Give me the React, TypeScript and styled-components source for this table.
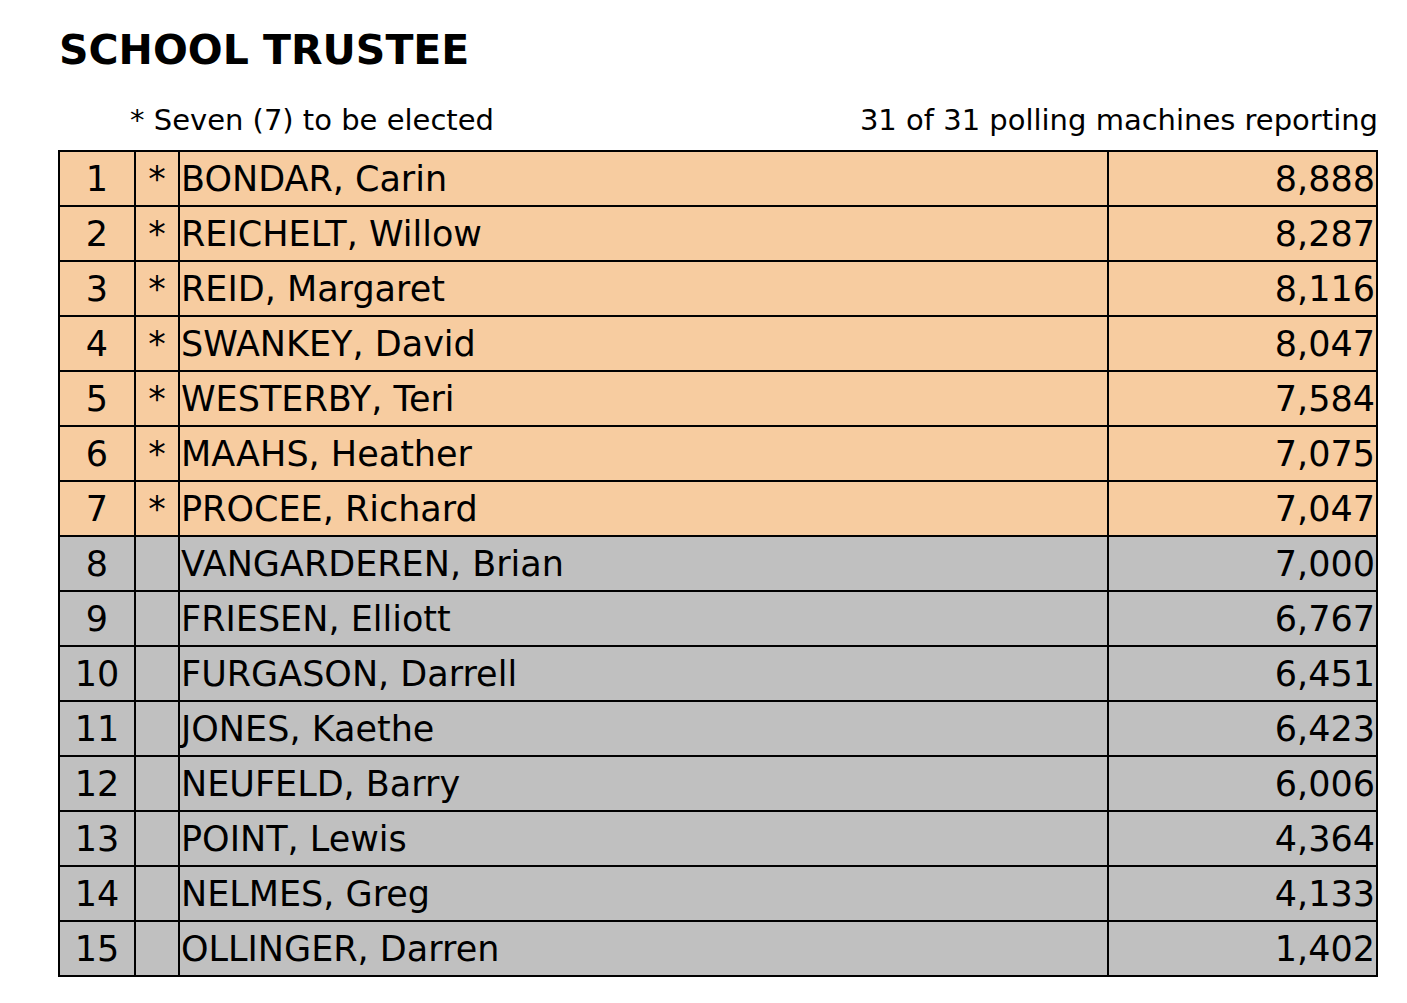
import React from 'react'
import styled, { createGlobalStyle } from 'styled-components'

const GlobalStyle = createGlobalStyle`
  body {
    margin: 0;
    background: #ffffff;
    font-family: Verdana, "DejaVu Sans", sans-serif;
    color: #000000;
  }
`

const Page = styled.div`
  padding: 26px 29px 0 58px;
  width: 1320px;
`

const Title = styled.h1`
  margin: 0;
  font-size: 41px;
  font-weight: bold;
  line-height: 48px;
  padding-left: 1px;
`

const InfoBar = styled.div`
  display: flex;
  justify-content: space-between;
  align-items: baseline;
  margin-top: 29px;
  font-size: 29px;
  line-height: 34px;
  padding-bottom: 13px;
`

const Note = styled.span`
  padding-left: 72px;
`

const Reporting = styled.span``

const Table = styled.table`
  width: 1320px;
  border-collapse: collapse;
  border: 2px solid #000000;
  font-size: 35px;
`

const Row = styled.tr<{ $elected: boolean }>`
  background: ${(p) => (p.$elected ? '#f7cca0' : '#c0c0c0')};
  height: 55px;
`

const Cell = styled.td<{ $align?: 'left' | 'center' | 'right' }>`
  border: 2px solid #000000;
  padding: 0 1px;
  text-align: ${(p) => p.$align ?? 'left'};
  vertical-align: middle;
  line-height: 40px;
  white-space: nowrap;
`

const RankCell = styled(Cell)`
  width: 72px;
`

const StarCell = styled(Cell)`
  width: 40px;
`

const VotesCell = styled(Cell)`
  width: 265px;
`

const candidates: [string, string][] = [
  ['BONDAR, Carin', '8,888'],
  ['REICHELT, Willow', '8,287'],
  ['REID, Margaret', '8,116'],
  ['SWANKEY, David', '8,047'],
  ['WESTERBY, Teri', '7,584'],
  ['MAAHS, Heather', '7,075'],
  ['PROCEE, Richard', '7,047'],
  ['VANGARDEREN, Brian', '7,000'],
  ['FRIESEN, Elliott', '6,767'],
  ['FURGASON, Darrell', '6,451'],
  ['JONES, Kaethe', '6,423'],
  ['NEUFELD, Barry', '6,006'],
  ['POINT, Lewis', '4,364'],
  ['NELMES, Greg', '4,133'],
  ['OLLINGER, Darren', '1,402'],
]

const SEATS = 7

export default function App() {
  return (
    <>
      <GlobalStyle />
      <Page>
        <Title>SCHOOL TRUSTEE</Title>
        <InfoBar>
          <Note>* Seven (7) to be elected</Note>
          <Reporting>31 of 31 polling machines reporting</Reporting>
        </InfoBar>
        <Table>
          <tbody>
            {candidates.map(([name, votes], i) => {
              const elected = i < SEATS
              return (
                <Row key={name} $elected={elected}>
                  <RankCell $align="center">{i + 1}</RankCell>
                  <StarCell $align="center">{elected ? '*' : ''}</StarCell>
                  <Cell>{name}</Cell>
                  <VotesCell $align="right">{votes}</VotesCell>
                </Row>
              )
            })}
          </tbody>
        </Table>
      </Page>
    </>
  )
}
